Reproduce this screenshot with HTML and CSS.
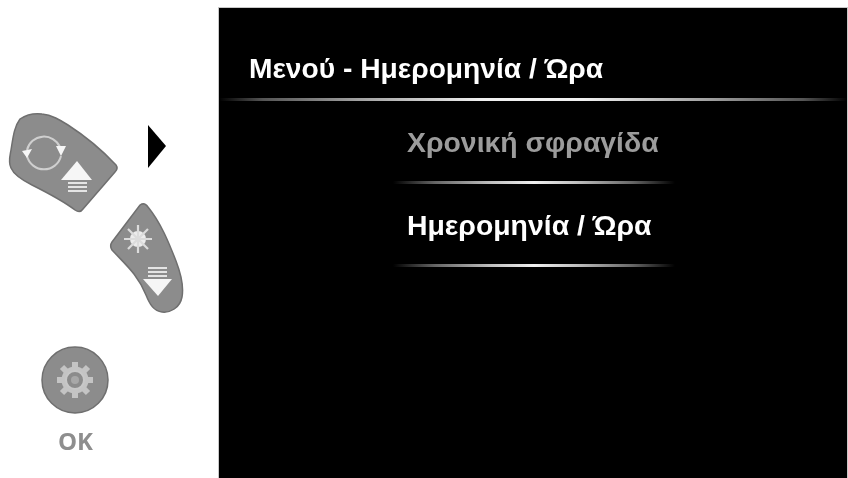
FILE: index.html
```html
<!DOCTYPE html>
<html lang="el">
<head>
<meta charset="utf-8">
<title>Μενού - Ημερομηνία / Ώρα</title>
<link rel="stylesheet" href="styles.css">
</head>
<body>
<div class="page">
  <aside class="controls">
    <svg class="btn-row" viewBox="0 0 218 220" width="218" height="220" aria-hidden="true">
      <path class="btn" d="M20 19 C26 15 34 13 42 14 C52 15 60 20 68 25 C85 36 102 50 116 65 C118 68 117 70 115 72 L83 109 C81 112 78 112 75 110 C62 100 48 93 32 85 C22 80 14 75 11 68 C8 62 10 56 11 50 C13 38 14 27 20 19 Z"/>
      <g class="ico-line">
        <path d="M27 50 A17.5 17.5 0 0 1 60 47"/>
        <path d="M61 56 A17.5 17.5 0 0 1 27 56"/>
      </g>
      <path class="ico-fill" d="M22 51 L32 49 L27 58 Z M56 46 L66 46 L61 56 Z"/>
      <path class="ico-fill" d="M77 61 L92 80 L61 80 Z"/>
      <path class="ico-bars" d="M68 83 H87 M68 87 H87 M68 91 H87"/>
      <path class="arrow" d="M148 25 L166 46 L148 68 Z"/>
      <path class="btn" d="M140 105 C143 103 146 104 148 107 C161 123 169 143 176 161 C181 174 184 186 182 197 C180 208 170 213 162 212 C154 211 150 205 146 195 C138 175 126 165 112 150 C110 147 110 145 112 142 Z"/>
      <g class="ico-sun">
        <circle cx="138" cy="139" r="8"/>
        <path d="M138 125 V153 M124 139 H152 M128 129 L148 149 M148 129 L128 149"/>
      </g>
      <path class="ico-bars" d="M148 168 H167 M148 172 H167 M148 176 H167"/>
      <path class="ico-fill" d="M143 179 L172 179 L158 196 Z"/>
    </svg>
    <svg class="btn-ok" viewBox="0 0 70 70" width="70" height="70" aria-hidden="true">
      <circle class="btn" cx="35" cy="35" r="33"/>
      <g class="ico-gear">
        <circle cx="35" cy="35" r="13.5"/>
        <path d="M35 17 V53 M17 35 H53 M22 22 L48 48 M48 22 L22 48"/>
      </g>
      <circle class="gear-hole" cx="35" cy="35" r="9"/>
      <circle class="gear-core" cx="35" cy="35" r="4"/>
    </svg>
    <div class="ok">OK</div>
  </aside>
  <main class="screen">
    <h1 class="title">Μενού - Ημερομηνία / Ώρα</h1>
    <div class="rule rule-wide"></div>
    <ul class="menu">
      <li class="item dim">Χρονική σφραγίδα</li>
      <li class="rule rule-item"></li>
      <li class="item">Ημερομηνία / Ώρα</li>
      <li class="rule rule-item"></li>
    </ul>
  </main>
</div>
</body>
</html>
```
FILE: styles.css
```css
html, body {
  margin: 0;
  padding: 0;
  background: #fff;
}
.page {
  width: 848px;
  height: 478px;
  display: flex;
  overflow: hidden;
  font-family: "Liberation Sans", Arial, sans-serif;
}
.controls {
  width: 218px;
  flex: none;
  display: flex;
  flex-direction: column;
  padding-top: 100px;
  box-sizing: border-box;
}
.btn-row { display: block; flex: none; filter: blur(0.5px); }
.btn-ok {
  display: block;
  flex: none;
  margin: 25px 0 0 40px;
  filter: blur(0.5px);
}
.btn { fill: #8c8c8c; stroke: #6f6f6f; stroke-width: 1.5; }
.arrow { fill: #000; }
.ico-line path { fill: none; stroke: #cfcfcf; stroke-width: 2; }
.ico-fill { fill: #f6f6f6; }
.ico-bars { fill: none; stroke: #e4e4e4; stroke-width: 2.2; }
.ico-sun circle { fill: #ececec; }
.ico-sun path { fill: none; stroke: #dcdcdc; stroke-width: 2.2; }
.ico-gear circle { fill: #c4c4c4; }
.ico-gear path { fill: none; stroke: #c4c4c4; stroke-width: 6; }
.gear-hole { fill: #8c8c8c; stroke: #c8c8c8; stroke-width: 2; }
.gear-core { fill: #a8a8a8; }
.ok {
  margin: 11px 0 0 58px;
  font-family: "Open Sans", sans-serif;
  font-weight: 700;
  font-size: 24px;
  line-height: 30px;
  color: #8e8e8e;
  filter: blur(0.4px);
}
.screen {
  flex: 1;
  margin-top: 7px;
  background: #000;
  color: #fff;
  min-width: 0;
  border: 1px solid #c8c8c8;
  border-bottom: 0;
}
.title {
  margin: 45px 0 0 30px;
  font-size: 28.2px;
  line-height: 30px;
  font-weight: 700;
  filter: blur(0.4px);
}
.rule {
  height: 3px;
  filter: blur(0.7px);
}
.rule-wide {
  margin-top: 15px;
  background: linear-gradient(90deg, #000 0%, #555 7%, #a0a0a0 22%, #f0f0f0 42%, #f0f0f0 58%, #a0a0a0 78%, #555 93%, #000 100%);
}
.menu {
  list-style: none;
  margin: 0 0 0 174px;
  padding: 0;
  width: 282px;
}
.item {
  margin: 26px 0 0 14px;
  font-size: 28.4px;
  line-height: 30px;
  font-weight: 700;
  filter: blur(0.4px);
}
.dim { color: #9c9c9c; }
.rule-item {
  margin-top: 24px;
  background: linear-gradient(90deg, #000 0%, #666 15%, #c0c0c0 35%, #f0f0f0 50%, #c0c0c0 65%, #666 85%, #000 100%);
}
```
